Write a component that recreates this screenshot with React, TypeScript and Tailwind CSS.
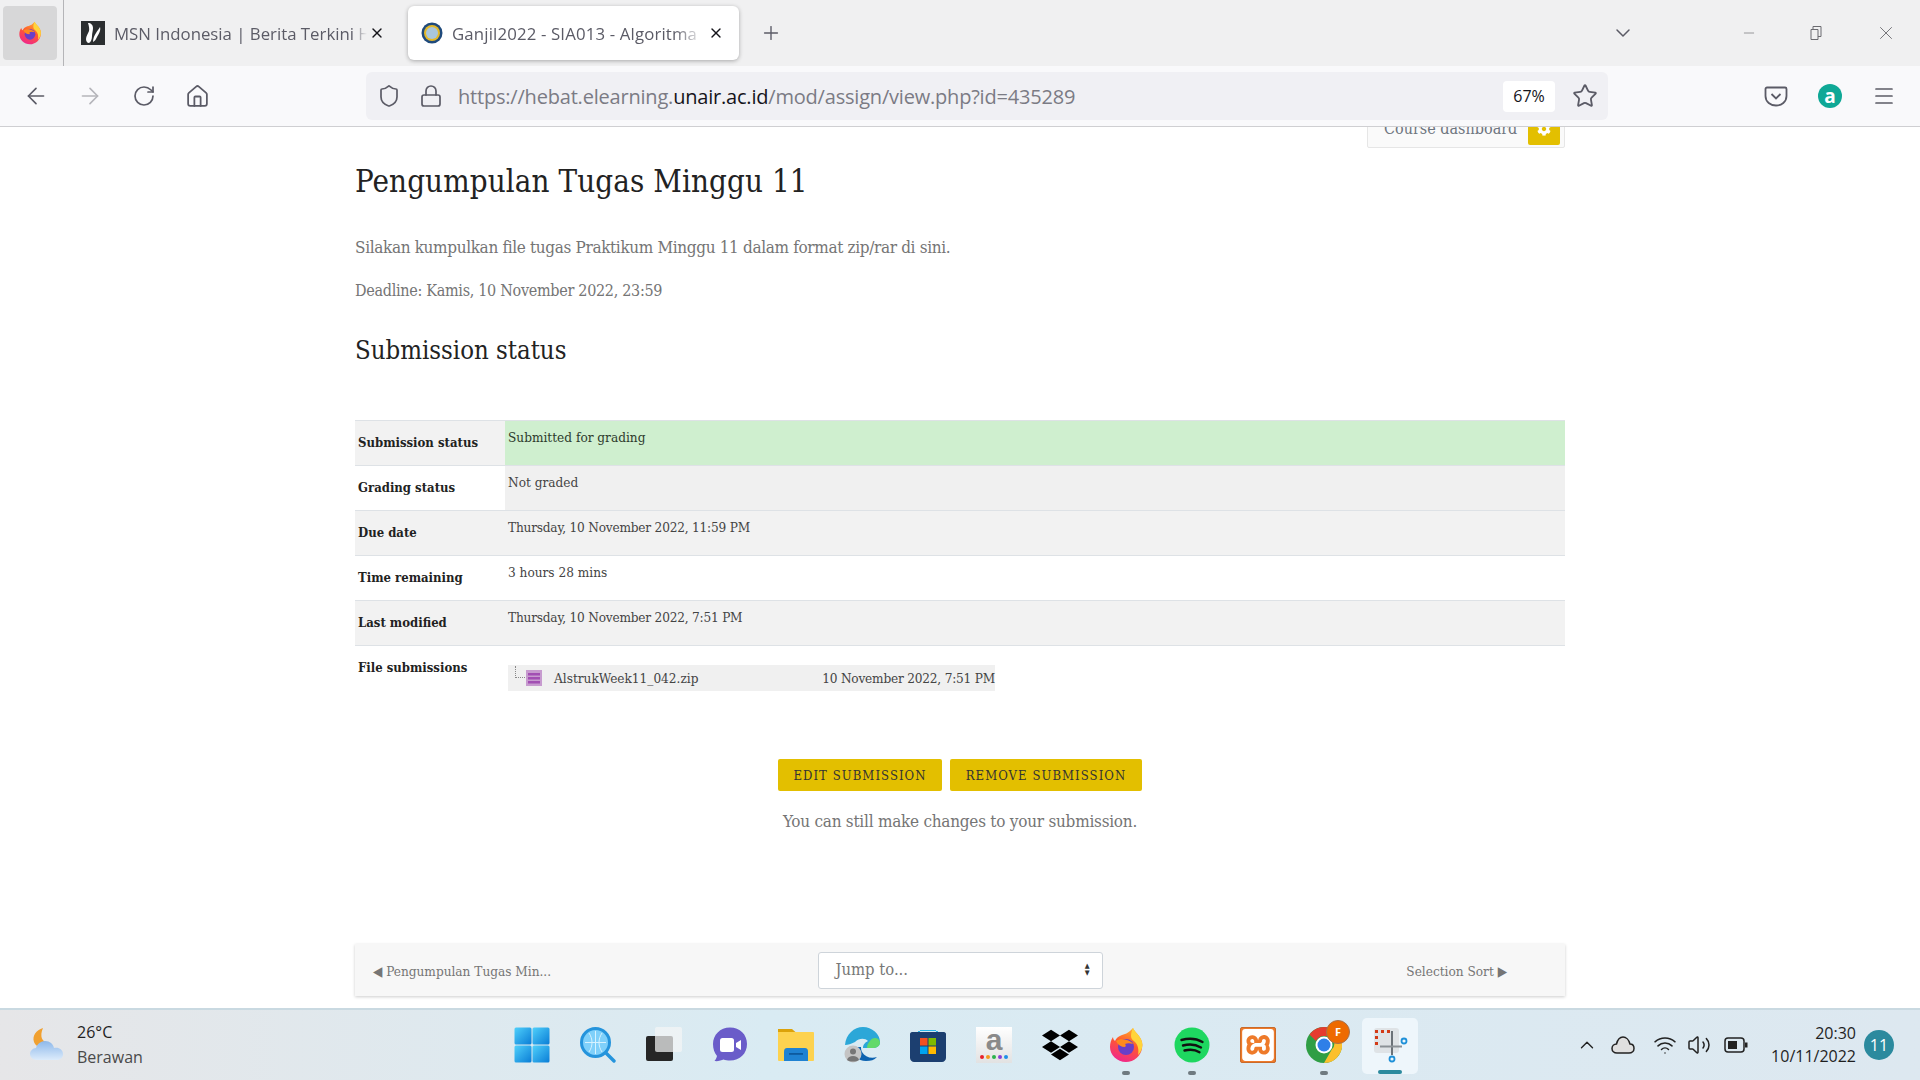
import React from 'react';
import { ArrowLeft, ArrowRight, RotateCw, Home, Star, Lock, Shield, ChevronDown, ChevronUp, X, Plus, Minus, Menu, Wifi, Volume2 } from 'lucide-react';
import { FaDropbox, FaCog } from 'react-icons/fa';
import { SiXampp } from 'react-icons/si';

const rows = [
    { label: 'Submission status', value: 'Submitted for grading', th: 'bg-[#f2f2f2]', td: 'bg-[#cfefcf] text-[#2d3a2d]' },
    { label: 'Grading status', value: 'Not graded', th: 'bg-white', td: 'bg-[#f0f0f0]' },
    { label: 'Due date', value: 'Thursday, 10 November 2022, 11:59 PM', th: 'bg-[#f2f2f2]', td: 'bg-[#f2f2f2] tracking-[-0.2px]' },
    { label: 'Time remaining', value: '3 hours 28 mins', th: 'bg-white', td: 'bg-white' },
    { label: 'Last modified', value: 'Thursday, 10 November 2022, 7:51 PM', th: 'bg-[#f2f2f2]', td: 'bg-[#f2f2f2] tracking-[-0.2px]' },
];

const FirefoxIcon = ({ size }: { size: number }) => (
    <svg width={size} height={size} viewBox="0 0 36 36">
        <defs>
            <linearGradient id="ffBody" x1="0.7" y1="0" x2="0.3" y2="1">
                <stop offset="0" stopColor="#ffb02e" />
                <stop offset="0.45" stopColor="#ff5a2e" />
                <stop offset="1" stopColor="#f0258f" />
            </linearGradient>
        </defs>
        <path d="M25 1c1 3 4 5 6 8 3 4 4 8 3 12-1 8-8 14-16 14C9 35 2 28 2 20c0-4 1-7 3-10 0 2 1 3 2 4 1-3 4-5 7-6 3-1 6-2 8-4 1-1 2-2 3-3z" fill="url(#ffBody)" />
        <path d="M25 1c1 3 4 5 6 8 3 4 4 8 3 12-1 3-2 5-4 7 1-5 0-10-3-13-2-2-4-3-4-6 0-3 1-6 2-8z" fill="#ffd43a" />
        <circle cx="18" cy="20" r="8" fill="#6a3fc8" />
        <path d="M8 14c3-2 7-2 11-1 3 1 5 2 6 4-3-1-6-1-8 0 1 1 1 2 0 3-4 0-7-2-9-6z" fill="#ff8a1e" />
    </svg>
);

const Taskbar = () => {
    const items: { node: React.ReactNode; dot?: boolean; active?: boolean }[] = [
        {
            node: (
                <svg width="36" height="36" viewBox="0 0 36 36">
                    <defs>
                        <linearGradient id="winA" x1="0" y1="0" x2="1" y2="1">
                            <stop offset="0" stopColor="#4fd0fb" />
                            <stop offset="1" stopColor="#0a7dd6" />
                        </linearGradient>
                    </defs>
                    <rect x="0.5" y="0.5" width="17" height="17" rx="1.5" fill="url(#winA)" />
                    <rect x="18.5" y="0.5" width="17" height="17" rx="1.5" fill="url(#winA)" />
                    <rect x="0.5" y="18.5" width="17" height="17" rx="1.5" fill="url(#winA)" />
                    <rect x="18.5" y="18.5" width="17" height="17" rx="1.5" fill="url(#winA)" />
                </svg>
            ),
        },
        {
            node: (
                <svg width="36" height="36" viewBox="0 0 36 36">
                    <circle cx="15.5" cy="15.5" r="14" fill="#7fd0fa" stroke="#2594dc" strokeWidth="3" />
                    <path d="M5 15.5h21M15.5 4v23M9 6c4 6 4 13 0 19M22 6c-4 6-4 13 0 19" stroke="#d6f2ff" strokeWidth="1" fill="none" />
                    <path d="M26 26l8 8" stroke="#2594dc" strokeWidth="3.4" strokeLinecap="round" />
                </svg>
            ),
        },
        {
            node: (
                <svg width="36" height="36" viewBox="0 0 36 36">
                    <rect x="0" y="9" width="27" height="25" rx="2" fill="#262626" />
                    <rect x="9" y="0" width="27" height="25" rx="2" fill="#f4f5f5" fillOpacity="0.72" />
                </svg>
            ),
        },
        {
            node: (
                <svg width="36" height="36" viewBox="0 0 36 36">
                    <path d="M18 0.5C8 0.5 1 8 1 17c0 5 1.500 9 4 12-.5 2-1.500 4-2.500 5 3 .5 7-.5 9-1.500 2 .7 4 1 6.500 1 10 0 17-7 17-16.500S28 .5 18 .5z" fill="#6a5cc9" />
                    <rect x="8" y="11" width="14" height="14" rx="2.500" fill="#fff" />
                    <path d="M24 16l5-3v10l-5-3z" fill="#fff" />
                </svg>
            ),
        },
        {
            node: (
                <svg width="36" height="36" viewBox="0 0 36 36">
                    <path d="M0 2h14l4 3.500h-18z" fill="#dca20a" />
                    <rect x="0" y="5" width="36" height="29" rx="1" fill="#fdd24f" />
                    <path d="M6 34v-9c0-3 1-4 3-4h18c2 0 3 1 3 4v9z" fill="#1f82d2" />
                    <rect x="11" y="26" width="14" height="1.800" fill="#0d5a9e" />
                </svg>
            ),
        },
        {
            node: (
                <svg width="36" height="36" viewBox="0 0 36 36">
                    <path d="M1 18C2 7 10 0 19 0c9 0 17 7 17 15 0 4-3 6-8 6h-9c0-4 3-6 5-7-3-3-9-3-13 1-4 2-7 3-10 3z" fill="#2ba7d8" />
                    <path d="M36 15c0 4-3 6-8 6h-5c0-4 2-6 3-7 2-4 9-4 10 1z" fill="#62d96a" />
                    <path d="M8 20c0 8 6 14 14 14 5 0 8-1 11-4-6 2-12 0-15-5-1-2-1-4-1-5z" fill="#0c62b0" />
                    <circle cx="9" cy="27" r="8.500" fill="#c4c4c4" />
                    <circle cx="9" cy="24.500" r="3" fill="#767676" />
                    <path d="M3 33c1-3 3-4 6-4s5 1 6 4c-3 2-9 2-12 0z" fill="#767676" />
                </svg>
            ),
        },
        {
            node: (
                <svg width="36" height="36" viewBox="0 0 36 36">
                    <path d="M8 4h20v2h-2V3h-16v3h-2z" fill="#29b6e8" />
                    <path d="M0 7c0-1 1-2 2-2h32c1 0 2 1 2 2v24c0 2-2 4-4 4H4c-2 0-4-2-4-4z" fill="#1c3f70" />
                    <rect x="10" y="11" width="7.500" height="7.500" fill="#f25022" />
                    <rect x="18.500" y="11" width="7.500" height="7.500" fill="#7fba00" />
                    <rect x="10" y="19.500" width="7.500" height="7.500" fill="#00a4ef" />
                    <rect x="18.500" y="19.500" width="7.500" height="7.500" fill="#ffb900" />
                </svg>
            ),
        },
        {
            node: (
                <div className="flex flex-col items-center justify-between w-9 h-9 bg-gradient-to-b from-white to-[#e2e2e2] pb-[4px]">
                    <span className="text-[30px] leading-[26px] font-bold text-[#8a8a8a] font-['Liberation_Sans',sans-serif]">a</span>
                    <div className="flex gap-[2px]">
                        <span className="w-1 h-1 rounded-full bg-[#e8202a]" />
                        <span className="w-1 h-1 rounded-full bg-[#f59a1c]" />
                        <span className="w-1 h-1 rounded-full bg-[#2bb24c]" />
                        <span className="w-1 h-1 rounded-full bg-[#8a3fd6]" />
                        <span className="w-1 h-1 rounded-full bg-[#1f8fe8]" />
                    </div>
                </div>
            ),
        },
        { node: <FaDropbox size={36} className="text-black" /> },
        { node: <FirefoxIcon size={36} />, dot: true },
        {
            node: (
                <svg width="36" height="36" viewBox="0 0 36 36">
                    <circle cx="18" cy="18" r="17.500" fill="#1ed760" />
                    <path d="M7.500 13c7-2 15-1.500 21 2M9 18.500c6-1.700 13-1 18 2M10.500 23.500c5-1.300 11-.8 15 1.700" stroke="#111" strokeWidth="2.400" strokeLinecap="round" fill="none" />
                </svg>
            ),
            dot: true,
        },
        {
            node: (
                <div className="flex items-center justify-center w-9 h-9 rounded-[2px] bg-[#ee7a2a] border border-[#c96a2a]">
                    <SiXampp size={32} className="text-white" />
                </div>
            ),
        },
        {
            node: (
                <div className="relative w-9 h-9">
                    <svg width="36" height="36" viewBox="0 0 36 36">
                        <circle cx="18" cy="18" r="18" fill="#2f9e44" />
                        <path d="M18 0a18 18 0 0 1 15.600 9H18a9 9 0 0 0-8 5L3.500 7.500A18 18 0 0 1 18 0z" fill="#e53b2f" />
                        <path d="M33.600 9A18 18 0 0 1 18 36l7.800-13.500A9 9 0 0 0 25 9z" fill="#fbc02d" />
                        <circle cx="18" cy="18" r="8.500" fill="#fff" />
                        <circle cx="18" cy="18" r="6.500" fill="#2f7fe8" />
                    </svg>
                    <span className="absolute top-[-7px] right-[-8px] w-6 h-6 rounded-full bg-[#ee6a00] border border-[#a8714a] text-white text-[11px] font-bold flex items-center justify-center font-['Open_Sans',sans-serif]">F</span>
                </div>
            ),
            dot: true,
        },
        {
            node: (
                <svg width="36" height="36" viewBox="0 0 36 36">
                    <rect x="2" y="1" width="25" height="25" rx="3" fill="#dfe3e6" />
                    <path d="M3 3h3v3H3zM9 3h3v3H9zM15 3h3v3h-3zM3 9h3v3H3zM3 15h3v3H3z" fill="#d33a16" />
                    <path d="M20 4v24" stroke="#6b7278" strokeWidth="2" />
                    <path d="M8 19.500h22" stroke="#8b9196" strokeWidth="2" />
                    <circle cx="32" cy="14" r="2.500" fill="none" stroke="#1e90d8" strokeWidth="1.800" />
                    <circle cx="20" cy="32" r="2.500" fill="none" stroke="#1e90d8" strokeWidth="1.800" />
                </svg>
            ),
            active: true,
        },
    ];

    return (
        <div className="h-[72px] shrink-0 flex items-center border-t-2 border-[#c9d9e1] bg-gradient-to-r from-[#e6e6e8] via-[#d9ebf3] via-40% to-[#dde8f0] text-[#1f1f1f] font-['Open_Sans',sans-serif]">
            <div className="w-[499px] shrink-0 flex items-center pl-[30px] gap-[11px]">
                <svg width="36" height="34" viewBox="0 0 36 34">
                    <defs>
                        <linearGradient id="wxCloud" x1="0" y1="0" x2="0" y2="1">
                            <stop offset="0" stopColor="#8db8ea" />
                            <stop offset="1" stopColor="#dcebfb" />
                        </linearGradient>
                    </defs>
                    <path d="M13 0c-7 2-11 8-9 14 1 3 4 5 8 5 3-1 5-3 6-5-5 1-9-5-5-14z" fill="#f0a030" />
                    <path d="M7 32c-4 0-7-3-7-6s3-6 6-6c1-4 5-7 9-7 5 0 8 3 9 7 5-1 9 2 9 6s-3 6-7 6z" fill="url(#wxCloud)" />
                </svg>
                <div className="flex flex-col leading-[25px] text-[16px]">
                    <span>26°C</span>
                    <span className="text-[#4a4a4a]">Berawan</span>
                </div>
            </div>
            <div className="flex h-full">
                {items.map((item, i) => (
                    <div key={i} className="relative w-[66px] h-full flex items-center justify-center">
                        {item.active && <div className="absolute left-[5px] right-[5px] top-[8px] bottom-[6px] rounded-[5px] bg-[#eef6fb]" />}
                        <div className="relative">{item.node}</div>
                        {item.dot && <span className="absolute bottom-[5px] left-1/2 -translate-x-1/2 w-2 h-1 rounded-full bg-[#6f7a80]" />}
                        {item.active && <span className="absolute bottom-[6px] left-1/2 -translate-x-1/2 w-6 h-1 rounded-full bg-[#2b8a9e]" />}
                    </div>
                ))}
            </div>
            <div className="flex-1 flex items-center pl-[153px]">
                <ChevronUp size={22} strokeWidth={1.5} className="text-[#222]" />
                <svg width="24" height="20" viewBox="0 0 24 20" className="ml-[13px]">
                    <path d="M6 18c-3 0-5-2-5-4.500S3 9 5.500 9C6.500 5 9 2 12 2s6 3 7 7c2.500 0 4 2 4 4.500S21 18 18 18z" fill="#dfdfdf" stroke="#222" strokeWidth="1.500" />
                </svg>
                <Wifi size={24} strokeWidth={1.5} className="ml-[18px] text-[#222]" />
                <Volume2 size={24} strokeWidth={1.5} className="ml-[10px] text-[#222]" />
                <svg width="24" height="16" viewBox="0 0 24 16" className="ml-[13px]">
                    <rect x="1" y="1" width="19" height="14" rx="3" fill="none" stroke="#222" strokeWidth="1.500" />
                    <rect x="4" y="4" width="9" height="8" fill="#222" />
                    <rect x="21" y="5.500" width="2.500" height="5" fill="#222" />
                </svg>
                <div className="ml-auto flex flex-col items-end text-[16px] leading-[23px]">
                    <span>20:30</span>
                    <span>10/11/2022</span>
                </div>
                <span className="ml-[8px] mr-[26px] w-[30px] h-[30px] rounded-full bg-[#2b8a9e] text-white text-[16px] flex items-center justify-center">11</span>
            </div>
        </div>
    );
};

const App: React.FC = () => {
    return (
        <div className="h-screen w-full overflow-hidden flex flex-col bg-white">
            {/* tabs */}
            <div className="h-[66px] shrink-0 flex items-center bg-[#f0f0f1] text-[#5b5b66] font-['Open_Sans',sans-serif] text-[16.800px]">
                <div className="ml-[3px] w-[54px] h-[54px] rounded-[4px] bg-[#d7d7d8] flex items-center justify-center">
                    <FirefoxIcon size={24} />
                </div>
                <div className="ml-[6px] w-px self-stretch bg-[#b5b5b8]" />
                <div className="w-[344px] h-[54px] flex items-center pl-[17px]">
                    <div className="w-6 h-6 bg-[#2b2e30] flex items-center justify-center shrink-0">
                        <svg width="18" height="22" viewBox="0 0 18 22">
                            <path d="M4 1c3 0 5 2 5 5 0 3-1 5-1 8 0 3-1 6-3 7-2 0-3-2-3-4 0-3 2-5 3-8 .5-2 0-5-1-8zM16 5c1 3-1 7-3 10-1 2-2 4-4 5 0-3 1-6 3-9 1-2 3-4 4-6z" fill="#fff" />
                        </svg>
                    </div>
                    <span className="ml-[9px] pt-[1px] w-[253px] shrink-0 whitespace-nowrap [mask-image:linear-gradient(to_right,black_94%,transparent)]">MSN Indonesia | Berita Terkini H</span>
                    <X size={16} strokeWidth={2} className="ml-[2px] text-[#15141a] shrink-0" />
                </div>
                <div className="w-[331px] h-[54px] rounded-[6px] bg-white shadow-[0_1px_4px_rgba(0,0,0,0.3)] flex items-center pl-[13px]">
                    <svg width="22" height="22" viewBox="0 0 22 22" className="shrink-0">
                        <circle cx="11" cy="11" r="10.500" fill="#1f4a7c" />
                        <circle cx="11" cy="11" r="8" fill="#e4b92a" />
                        <circle cx="11" cy="11" r="6" fill="#a9c6dc" />
                    </svg>
                    <span className="ml-[9px] pt-[1px] w-[252px] shrink-0 whitespace-nowrap tracking-[0.15px] [mask-image:linear-gradient(to_right,black_88%,transparent)]">Ganjil2022 - SIA013 - Algoritma</span>
                    <X size={16} strokeWidth={2} className="ml-[4px] text-[#15141a] shrink-0" />
                </div>
                <Plus size={22} strokeWidth={1.5} className="ml-[21px]" />
                <ChevronDown size={24} strokeWidth={1.5} className="ml-[829px]" />
                <Minus size={16} strokeWidth={1} className="ml-[106px] text-[#6b6b70]" />
                <svg width="16" height="16" viewBox="0 0 16 16" className="ml-[52px] text-[#6b6b70]">
                    <path d="M4 4.500V1.500h8v10H9M2 4.500h7v10H2z" fill="none" stroke="currentColor" />
                </svg>
                <X size={22} strokeWidth={1} className="ml-[50px] text-[#6b6b70]" />
            </div>

            {/* toolbar */}
            <div className="h-[61px] shrink-0 flex items-start bg-[#f9f9fb] border-b border-[#cfcfd2] text-[#5b5b66] font-['Open_Sans',sans-serif]">
                <div className="h-[60px] flex items-center pl-[23px]">
                    <ArrowLeft size={26} strokeWidth={1.5} />
                    <ArrowRight size={26} strokeWidth={1.5} className="ml-[28px] text-[#b5b5ba]" />
                    <RotateCw size={24} strokeWidth={1.7} className="ml-[29px]" />
                    <Home size={25} strokeWidth={1.7} className="ml-[29px]" />
                </div>
                <div className="ml-[156px] mt-[6px] w-[1242px] h-12 rounded-[6px] bg-[#f0f0f4] flex items-center pl-[11px] pr-[10px]">
                    <Shield size={24} strokeWidth={1.7} />
                    <Lock size={24} strokeWidth={1.7} className="ml-[18px]" />
                    <span className="ml-[15px] pt-[1px] text-[20px] tracking-[-0.2px] text-[#7b7b84] whitespace-nowrap">
                        https://hebat.elearning.<span className="text-[#15141a]">unair.ac.id</span>/mod/assign/view.php?id=435289
                    </span>
                    <span className="ml-auto w-[52px] h-[31px] rounded-[4px] bg-white text-[#15141a] text-[16px] flex items-center justify-center">67%</span>
                    <Star size={26} strokeWidth={1.7} className="ml-[17px]" />
                </div>
                <div className="h-[60px] flex items-center">
                    <svg width="24" height="24" viewBox="0 0 24 24" className="ml-[156px]">
                        <path d="M3 3.500h18c.8 0 1.500.7 1.500 1.500v7c0 6-5 9.500-10.500 9.500S1.500 18 1.500 12V5c0-.8.7-1.500 1.500-1.500z" fill="none" stroke="currentColor" strokeWidth="1.800" />
                        <path d="M7.500 10l4.500 4.500 4.500-4.500" fill="none" stroke="currentColor" strokeWidth="1.800" />
                    </svg>
                    <span className="ml-[30px] w-6 h-6 rounded-full bg-[#0fa896] text-white text-[19px] font-bold leading-none flex items-center justify-center">a</span>
                    <Menu size={24} strokeWidth={1.7} className="ml-[30px]" />
                </div>
            </div>

            {/* page */}
            <div className="flex-1 min-h-0 overflow-hidden font-['DejaVu_Serif',serif] [font-stretch:condensed] text-[#757575]">
                <div className="mx-auto w-[1210px]">
                    <div className="flex justify-end -mt-[22px]">
                        <div className="w-[198px] h-[43px] bg-[#fafafa] border border-[#e6e6e6] rounded-[2px] flex items-start pt-[2px] pl-[16px] pr-[4px] justify-between text-[16px] text-[#6f7680]">
                            <span className="leading-[44px] -mt-[1px]">Course dashboard</span>
                            <span className="w-8 h-[38px] -mt-[1px] rounded-[2px] bg-[#e3bf00] flex items-end justify-center pb-[9px]">
                                <FaCog size={14} className="text-white" />
                            </span>
                        </div>
                    </div>
                    <h1 className="mt-[13px] text-[31px] leading-[40px] text-[#222] tracking-[0.1px]">Pengumpulan Tugas Minggu 11</h1>
                    <p className="mt-[34px] text-[17px] leading-[24px] tracking-[-0.35px]">Silakan kumpulkan file tugas Praktikum Minggu 11 dalam format zip/rar di sini.</p>
                    <p className="mt-[20px] text-[16px] leading-[24px] tracking-[-0.3px]">Deadline: Kamis, 10 November 2022, 23:59</p>
                    <h3 className="mt-[31px] text-[25.500px] leading-[32px] text-[#222]">Submission status</h3>

                    <div className="mt-[54px] text-[13.500px] text-[#444]">
                        {rows.map((row) => (
                            <div key={row.label} className="flex h-[45px] border-t border-[#dee2e6]">
                                <div className={`w-[150px] px-[3px] flex items-center font-bold text-[13px] text-[#222] ${row.th}`}>{row.label}</div>
                                <div className={`flex-1 px-[3px] pt-[6px] ${row.td}`}>{row.value}</div>
                            </div>
                        ))}
                        <div className="flex h-[65px] border-t border-[#dee2e6]">
                            <div className="w-[150px] px-[3px] pt-[12px] font-bold text-[13px] text-[#222]">File submissions</div>
                            <div className="pl-[3px] pt-[19px]">
                                <div className="w-[487px] h-[26px] bg-[#f0f0f0] flex items-center">
                                    <span className="ml-[7px] w-[10px] h-[12px] -mt-[12px] border-l border-b border-dotted border-[#888]" />
                                    <svg width="16" height="16" viewBox="0 0 16 16" className="ml-[1px] shrink-0">
                                        <rect x="0" y="0" width="16" height="16" fill="#c79bcf" />
                                        <path d="M2 3h12v2.500H2zM2 7h12v2.500H2zM2 11h12v2.500H2z" fill="#a24fb3" />
                                    </svg>
                                    <span className="ml-[12px]">AlstrukWeek11_042.zip</span>
                                    <span className="ml-auto tracking-[-0.2px]">10 November 2022, 7:51 PM</span>
                                </div>
                            </div>
                        </div>
                    </div>

                    <div className="mt-[49px] flex justify-center gap-2">
                        <button className="w-[164px] h-8 pt-[1px] rounded-[2px] bg-[#e3bf00] text-[13px] tracking-[1.05px] text-[#333]">EDIT SUBMISSION</button>
                        <button className="w-[192px] h-8 pt-[1px] rounded-[2px] bg-[#e3bf00] text-[13px] tracking-[1.05px] text-[#333]">REMOVE SUBMISSION</button>
                    </div>
                    <p className="mt-[18px] text-center text-[17px] leading-[24px] tracking-[-0.25px]">You can still make changes to your submission.</p>

                    <div className="mt-[111px] h-[52px] bg-[#f7f7f7] shadow-[0_1px_3px_rgba(0,0,0,0.2)] flex items-center px-[18px] text-[13.500px]">
                        <span className="flex-1 pt-[2px]">◀ Pengumpulan Tugas Min...</span>
                        <div className="w-[285px] h-[37px] bg-white border border-[#ced4da] rounded-[3px] flex items-center justify-between pl-[17px] pr-[12px] text-[16.500px] text-[#777]">
                            <span>Jump to...</span>
                            <span className="flex flex-col text-[7px] leading-[7px] text-[#333]"><span>▲</span><span>▼</span></span>
                        </div>
                        <div className="flex-1 text-right pt-[2px]"><span className="mr-[40px]">Selection Sort ▶</span></div>
                    </div>
                </div>
            </div>

            <Taskbar />
        </div>
    );
};

export default App;
